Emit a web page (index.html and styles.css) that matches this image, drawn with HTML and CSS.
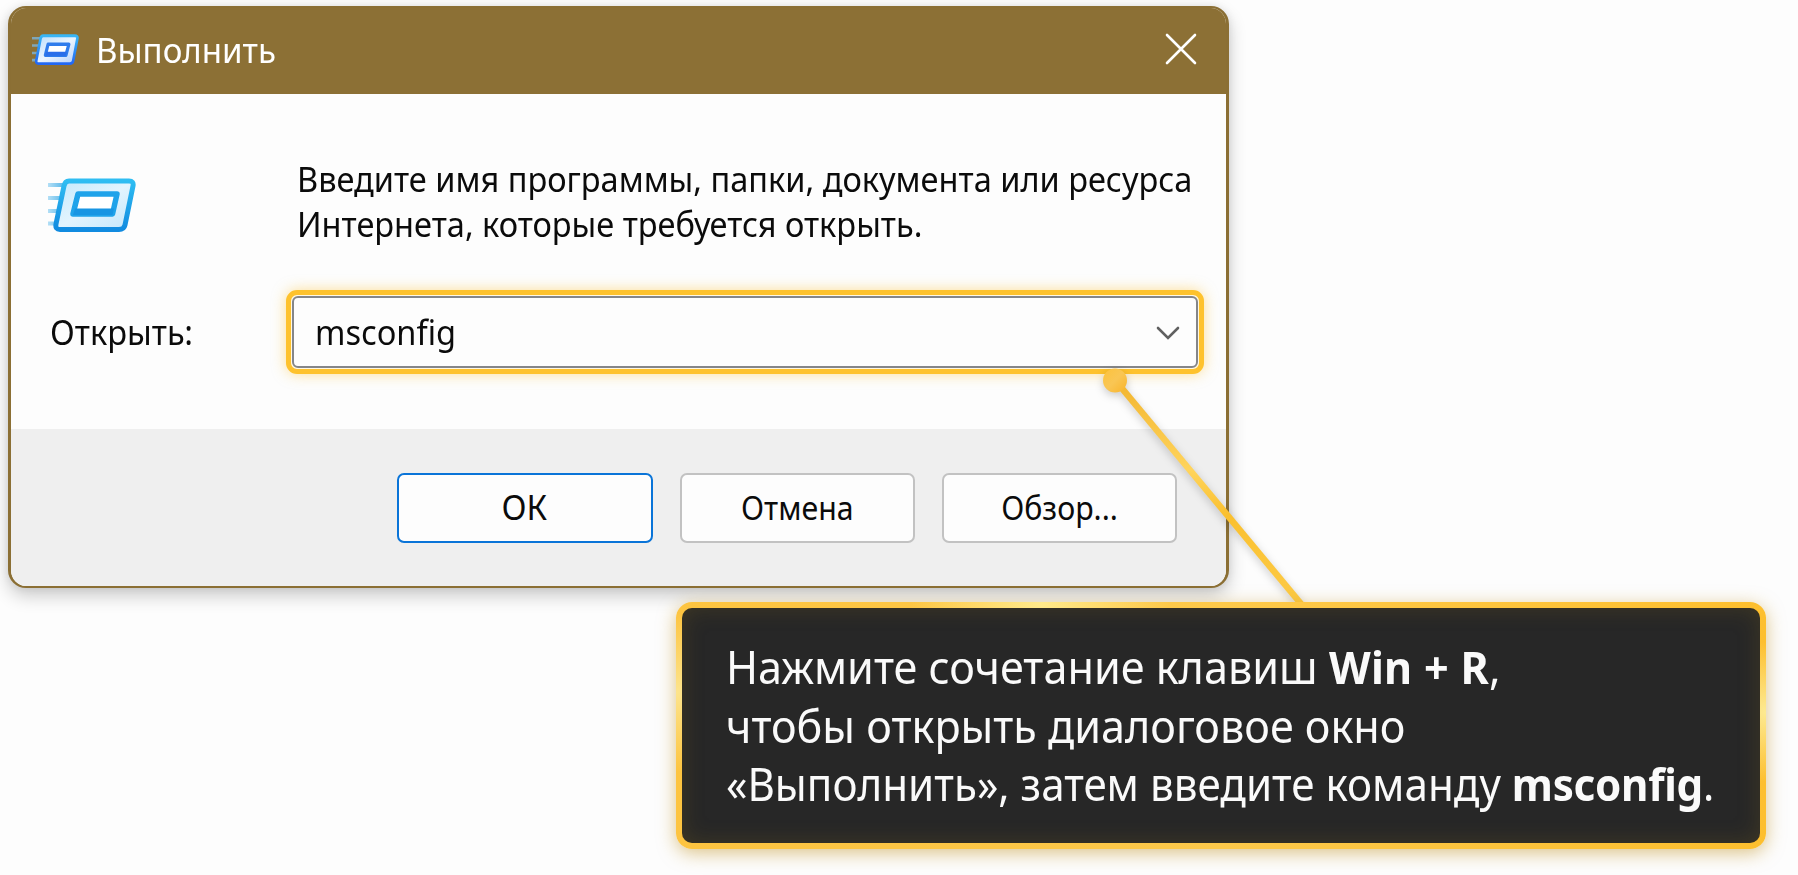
FILE: index.html
```html
<!DOCTYPE html>
<html lang="ru">
<head>
<meta charset="utf-8">
<title>Выполнить</title>
<link rel="stylesheet" href="styles.css">
</head>
<body>
<main class="stage">
  <section class="dialog">
    <header class="titlebar">
      <svg class="title-icon" viewBox="0 0 88 54" preserveAspectRatio="none">
        <defs>
          <linearGradient id="ts" x1="0" y1="0" x2="0" y2="1"><stop offset="0" stop-color="#38b6f5"/><stop offset="1" stop-color="#2268f4"/></linearGradient>
          <linearGradient id="tf" x1="0" y1="0" x2="1" y2="1"><stop offset="0" stop-color="#b9dcfb"/><stop offset=".5" stop-color="#eaf4ff"/><stop offset="1" stop-color="#b4d0fb"/></linearGradient>
        </defs>
        <path d="M0 7.500H18M0 20H15M0 33H12M0 45.500H9" stroke="#7fa6b8" stroke-width="4.500"/>
        <path d="M21 3H80Q86 3 85 8L77 47Q76 51.500 71 51.500H12Q7 51.500 8 46L16 8Q17 3 21 3Z" fill="url(#tf)" stroke="url(#ts)" stroke-width="5"/>
        <path d="M30 18H69L63.500 37H25Z" fill="#fff" stroke="#2f7cec" stroke-width="6" stroke-linejoin="round"/>
        <path d="M26 31H65L63 38H25Z" fill="#2a6eea"/>
      </svg>
      <h1 class="title">Выполнить</h1>
      <svg class="close" viewBox="0 0 32 32"><path d="M2 2L30 30M30 2L2 30" stroke="#fff" stroke-width="2.600" stroke-linecap="round"/></svg>
    </header>
    <div class="body">
      <svg class="run-icon" viewBox="0 0 88 54">
        <defs>
          <linearGradient id="rs" x1="0" y1="0" x2="0" y2="1"><stop offset="0" stop-color="#2fbdf2"/><stop offset="1" stop-color="#118be0"/></linearGradient>
          <linearGradient id="rf" x1="0" y1="0" x2="1" y2="1"><stop offset="0" stop-color="#c4e9fc"/><stop offset=".5" stop-color="#e2f4fe"/><stop offset="1" stop-color="#c3e6fb"/></linearGradient>
          <linearGradient id="rl" x1="0" y1="0" x2="1" y2="0"><stop offset="0" stop-color="#b3dff6"/><stop offset="1" stop-color="#56b5e8"/></linearGradient>
        </defs>
        <path d="M0 5H17V9H0ZM0 18H14V22H0ZM0 31H11V35H0ZM0 43.500H8V47.500H0Z" fill="url(#rl)"/>
        <path d="M21 3H81Q86 3 85 8L77 47Q76 51.500 71 51.500H12Q7 51.500 8 46L16 8Q17 3 21 3Z" fill="url(#rf)" stroke="url(#rs)" stroke-width="5"/>
        <path d="M30 16H69L64.500 36H25Z" fill="#fff" stroke="#1fa3ea" stroke-width="5.500" stroke-linejoin="round"/>
        <path d="M27 30.500H66L64.500 37H25Z" fill="#1795e3"/>
      </svg>
      <p class="intro"><span class="line">Введите имя программы, папки, документа или ресурса</span><span class="line">Интернета, которые требуется открыть.</span></p>
      <label class="label">Открыть:</label>
      <div class="combo">
        <div class="field"><span class="value">msconfig</span>
          <svg class="chevron" viewBox="0 0 24 14"><path d="M2 2L12 12L22 2" fill="none" stroke="#606060" stroke-width="2.600" stroke-linecap="round"/></svg>
        </div>
      </div>
    </div>
    <footer class="actions">
      <button class="btn ok"><span class="caption">ОК</span></button>
      <button class="btn"><span class="caption">Отмена</span></button>
      <button class="btn"><span class="caption">Обзор...</span></button>
    </footer>
  </section>
  <svg class="leader" viewBox="0 0 1798 875">
    <defs>
      <linearGradient id="ln" x1="0" y1="0" x2="0" y2="1"><stop offset="0" stop-color="#f2b52f"/><stop offset=".4" stop-color="#ffd45c"/><stop offset=".6" stop-color="#fac02f"/><stop offset="1" stop-color="#fdcb47"/></linearGradient>
      <linearGradient id="dt" x1="0" y1="0" x2="1" y2="1"><stop offset="0" stop-color="#fcc23c"/><stop offset=".5" stop-color="#f9c654"/><stop offset="1" stop-color="#f9b42a"/></linearGradient>
    </defs>
    <path d="M1115 380L1302 605" stroke="url(#ln)" stroke-width="6.500"/>
    <circle cx="1115" cy="380.500" r="12" fill="url(#dt)"/>
  </svg>
  <aside class="callout">
    <p class="tip"><span class="row keys">Нажмите сочетание клавиш <b>Win + R</b>,</span><span class="row open">чтобы открыть диалоговое окно</span><span class="row command">«Выполнить», затем введите команду <b>msconfig</b>.</span></p>
  </aside>
</main>
</body>
</html>
```
FILE: styles.css
```css
* { box-sizing: border-box; }
body { margin: 0; background: #fdfdfd; font-family: "Noto Sans", "Open Sans", sans-serif; color: #0b0b0b; }
h1, p { margin: 0; font-weight: 400; }
.stage { position: relative; width: 1798px; height: 875px; padding: 6px 0 0 8px; overflow: hidden; }
.dialog { width: 1221px; height: 582px; border: solid #8b6f34; border-width: 2px 3px 2px 3px; border-radius: 18px; overflow: hidden; background: #fdfdfd; display: flex; flex-direction: column; box-shadow: 0 8px 18px rgba(0,0,0,.2), 0 0 8px rgba(0,0,0,.08); }
.titlebar { height: 86px; flex: none; background: #8c7035; display: flex; align-items: center; padding: 0 29px 0 21px; }
.title-icon { width: 47px; height: 31px; margin-top: -4px; }
.title { margin-left: 17px; margin-top: -3px; font-size: 35px; line-height: 44px; color: #fff; white-space: nowrap; transform: scaleX(.945); transform-origin: 0 50%; }
.close { width: 32px; height: 32px; margin: -5px 0 0 auto; }
.body { height: 335px; flex: none; display: grid; grid-template-columns: 236px 918px; grid-template-rows: 196px 84px; padding-left: 39px; }
.run-icon { width: 88px; height: 54px; margin: 84px 0 0 -2px; }
.intro { padding: 63px 0 0 11px; font-size: 34px; line-height: 44.500px; white-space: nowrap; }
.line { display: block; width: max-content; transform: scaleX(.957); transform-origin: 0 50%; }
.label { align-self: center; width: max-content; font-size: 34px; line-height: 44px; transform: scaleX(.958); transform-origin: 0 50%; }
.combo { height: 84px; border: 5px solid #fec22d; border-radius: 11px; padding: 1px; background: #fff8e4; box-shadow: 0 0 14px rgba(254,194,45,.5); }
.field { height: 72px; border: 2px solid #858689; border-radius: 6px; background: #fdfdfd; display: flex; align-items: center; justify-content: space-between; padding: 0 16px 0 21px; font-size: 34px; }
.value { transform: scaleX(.957); transform-origin: 0 50%; }
.chevron { width: 24px; height: 14px; margin-top: 2px; }
.actions { flex: 1; background: #efefef; display: flex; gap: 27px; padding: 44px 0 0 386px; }
.btn { height: 70px; width: 235px; padding: 0; border: 2px solid #c2c2c2; border-radius: 7px; background: #fdfdfd; font: 33px "Noto Sans", sans-serif; color: #0b0b0b; }
.btn.ok { width: 256px; border-color: #0a74d8; font-size: 35px; }
.caption { display: inline-block; transform: translateY(-1px) scaleX(.918); }
.ok .caption { transform: translate(-1px, -2px) scaleX(.94); }
.leader { position: absolute; left: 0; top: 0; width: 1798px; height: 875px; filter: drop-shadow(0 3px 4px rgba(0,0,0,.2)); }
.callout { position: absolute; left: 676px; top: 602px; width: 1090px; height: 247px; border: 6.500px solid transparent; border-radius: 16px; padding: 30px 0 0 44px; background: linear-gradient(#272727,#272727) padding-box, radial-gradient(circle at 365px 0, #ffea8c 0, rgba(255,234,140,0) 130px) border-box, radial-gradient(circle at 100% 110px, #fdea92 0, rgba(253,234,146,0) 70px) border-box, radial-gradient(circle at 0 90px, #fde48c 0, rgba(253,228,140,0) 80px) border-box, linear-gradient(90deg,#fdc440,#fdc94a 50%,#fdbf2e) border-box; box-shadow: 0 4px 18px rgba(190,140,20,.5), inset 0 0 22px rgba(130,105,30,.28); }
.tip { font-size: 45px; line-height: 58.500px; color: #fafafa; white-space: nowrap; }
.row { display: block; width: max-content; transform-origin: 0 50%; }
.keys { transform: scaleX(.959); }
.keys b { letter-spacing: .3px; }
.open { transform: scaleX(.958); }
.command { transform: scaleX(.937); }
.command b { letter-spacing: -.3px; }
```
